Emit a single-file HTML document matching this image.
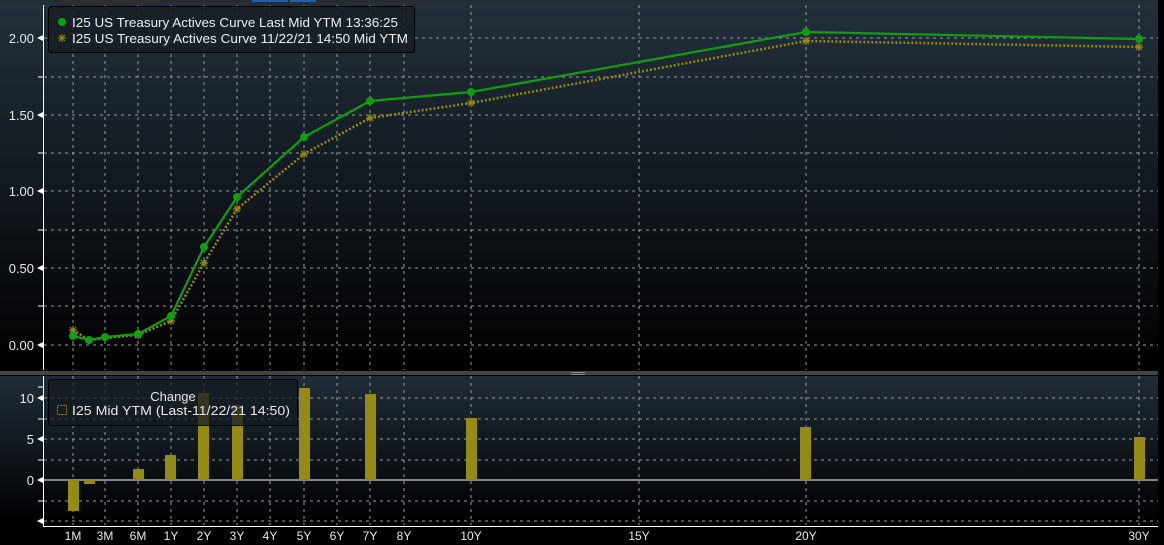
<!DOCTYPE html><html><head><style>
html,body{margin:0;padding:0;background:#000;}
svg{display:block;font-family:"Liberation Sans",sans-serif;}
</style></head><body>
<svg width="1164" height="545" xmlns="http://www.w3.org/2000/svg">
<defs>
<linearGradient id="g1" x1="0" y1="0" x2="0" y2="1"><stop offset="0" stop-color="#22303c"/><stop offset="0.55" stop-color="#10161c"/><stop offset="1" stop-color="#000"/></linearGradient>
<linearGradient id="g2" x1="0" y1="0" x2="0" y2="1"><stop offset="0" stop-color="#1f2c38"/><stop offset="1" stop-color="#000"/></linearGradient>
</defs>
<rect width="1164" height="545" fill="#000"/>
<rect x="0" y="0" width="1158" height="370" fill="url(#g1)"/>
<rect x="0" y="376" width="1158" height="150" fill="url(#g2)"/>
<rect x="0" y="0" width="1164" height="2" fill="#2a2a2a"/>
<rect x="62" y="0" width="100" height="2" fill="#3a2a1a"/>
<rect x="252" y="0" width="36" height="2" fill="#1d5fb4"/>
<rect x="290" y="0" width="26" height="2" fill="#1d5fb4"/>
<rect x="0" y="371" width="1164" height="4" fill="#444"/>
<g stroke="#9a9a9a" stroke-width="1" stroke-dasharray="3,4" fill="none">
<path d="M73 5V370M105 5V370M138 5V370M171 5V370M204 5V370M237 5V370M270 5V370M304 5V370M337 5V370M370 5V370M404 5V370M471 5V370M639 5V370M806 5V370M1139 5V370"/>
<path d="M73 376V525M105 376V525M138 376V525M171 376V525M204 376V525M237 376V525M270 376V525M304 376V525M337 376V525M370 376V525M404 376V525M471 376V525M639 376V525M806 376V525M1139 376V525"/>
<path d="M44 38H1158M44 77H1158M44 115H1158M44 153H1158M44 191H1158M44 230H1158M44 268H1158M44 306H1158M44 345H1158"/>
<path d="M44 398H1158M44 419H1158M44 439H1158M44 460H1158M44 501H1158M44 521H1158"/>
</g>
<path d="M44 480H1158" stroke="#fff" stroke-width="1"/>
<path d="M43.5 5V370M43.5 376V526M43 526.5H1158" stroke="#fff" stroke-width="1"/>
<g fill="#fff"><path d="M37 38l6-3v6zM37 115l6-3v6zM37 191l6-3v6zM37 268l6-3v6zM37 345l6-3v6zM37 398l6-3v6zM37 439l6-3v6zM37 480l6-3v6zM37 521l6-3v6z"/></g>
<path d="M38 77H43M38 153H43M38 230H43M38 306H43M38 419H43M38 460H43M38 501H43M38 387H43" stroke="#fff"/>
<g fill="#e8e8e8" font-size="13" text-anchor="end">
<text x="34" y="43">2.00</text><text x="34" y="120">1.50</text><text x="34" y="196">1.00</text><text x="34" y="273">0.50</text><text x="34" y="350">0.00</text>
<text x="34" y="403">10</text><text x="34" y="444">5</text><text x="34" y="485">0</text>
</g>
<g fill="#e8e8e8" font-size="12" text-anchor="middle">
<text x="73" y="540">1M</text><text x="105" y="540">3M</text><text x="138" y="540">6M</text><text x="171" y="540">1Y</text><text x="204" y="540">2Y</text><text x="237" y="540">3Y</text><text x="270" y="540">4Y</text><text x="304" y="540">5Y</text><text x="337" y="540">6Y</text><text x="370" y="540">7Y</text><text x="404" y="540">8Y</text><text x="471" y="540">10Y</text><text x="639" y="540">15Y</text><text x="806" y="540">20Y</text><text x="1139" y="540">30Y</text>
</g>
<g fill="#958a14">
<rect x="68" y="480" width="11" height="31"/><rect x="84" y="480" width="11" height="4"/><rect x="100" y="479" width="11" height="1"/>
<rect x="133" y="469" width="11" height="11"/><rect x="165" y="455" width="11" height="25"/><rect x="198" y="393" width="11" height="87"/>
<rect x="232" y="405" width="11" height="75"/><rect x="299" y="388" width="11" height="92"/><rect x="365" y="394" width="11" height="86"/>
<rect x="466" y="418" width="11" height="62"/><rect x="800" y="427" width="11" height="53"/><rect x="1134" y="437" width="11" height="43"/>
</g>
<rect x="48.5" y="379.5" width="249" height="46" rx="3" fill="rgba(20,26,32,0.75)" stroke="#000"/>
<text x="173" y="401" fill="#e8e8e8" font-size="13" text-anchor="middle">Change</text>
<rect x="57.5" y="405.5" width="9" height="9" fill="none" stroke="#958a14" stroke-dasharray="2,1"/>
<text x="72" y="415" fill="#e8e8e8" font-size="13" textLength="218" lengthAdjust="spacingAndGlyphs">I25 Mid YTM (Last-11/22/21 14:50)</text>
<polyline fill="none" stroke="#958a14" stroke-width="2.5" stroke-dasharray="2,2" points="73,330 89,340 105,338 138,335 171,321 204,263 237,209 304,154 370,118 471,103 806,41 1139,47"/>
<g stroke="#958a14" stroke-width="1.2">
<path d="M69 330h8M73 326v8M70 327l6 6M76 327l-6 6M1135 47h8M1139 43v8M1136 44l6 6M1142 44l-6 6M802 41h8M806 37v8M803 38l6 6M809 38l-6 6M467 103h8M471 99v8M468 100l6 6M474 100l-6 6M366 118h8M370 114v8M367 115l6 6M373 115l-6 6M300 154h8M304 150v8M301 151l6 6M307 151l-6 6M233 209h8M237 205v8M234 206l6 6M240 206l-6 6M200 263h8M204 259v8M201 260l6 6M207 260l-6 6M167 321h8M171 317v8M168 318l6 6M174 318l-6 6M134 335h8M138 331v8M135 332l6 6M141 332l-6 6M101 338h8M105 334v8M85 340h8M89 336v8"/>
</g>
<polyline fill="none" stroke="#0ea00e" stroke-width="2.2" points="73,336 89,340 105,337 138,334 171,316 204,247 237,197 304,137 370,101 471,92 806,32 1139,39"/>
<g fill="#0ea00e">
<circle cx="73" cy="336" r="4"/><circle cx="89" cy="340" r="4"/><circle cx="105" cy="337" r="4"/><circle cx="138" cy="334" r="4"/><circle cx="171" cy="316" r="4"/><circle cx="204" cy="247" r="4"/><circle cx="237" cy="197" r="4"/><circle cx="304" cy="137" r="4"/><circle cx="370" cy="101" r="4"/><circle cx="471" cy="92" r="4"/><circle cx="806" cy="32" r="4"/><circle cx="1139" cy="39" r="4"/>
</g>
<rect x="48.5" y="6.5" width="366" height="46" rx="3" fill="rgba(24,30,36,0.85)" stroke="#000"/>
<circle cx="62" cy="22" r="4" fill="#0ea00e"/>
<text x="72" y="27" fill="#eee" font-size="13" textLength="326" lengthAdjust="spacingAndGlyphs">I25 US Treasury Actives Curve Last Mid YTM 13:36:25</text>
<g stroke="#958a14" stroke-width="1"><path d="M58 38h8M62 34v8M59 35l6 6M65 35l-6 6"/></g>
<text x="72" y="43" fill="#eee" font-size="13" textLength="336" lengthAdjust="spacingAndGlyphs">I25 US Treasury Actives Curve 11/22/21 14:50 Mid YTM</text>
<rect x="571" y="372" width="14" height="1" fill="#888"/><rect x="571" y="374" width="14" height="1" fill="#888"/>
<rect x="1158" y="0" width="6" height="545" fill="#000"/>
</svg>
</body></html>
